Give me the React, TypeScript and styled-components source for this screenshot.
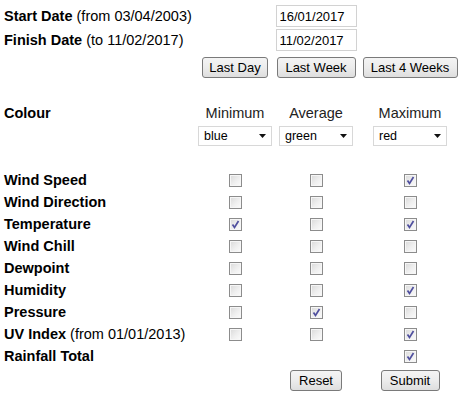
import React from 'react';
import styled, { createGlobalStyle } from 'styled-components';

const GlobalStyle = createGlobalStyle`
  html, body {
    margin: 0;
    padding: 0;
    background: #fff;
  }
  body {
    font-family: "Liberation Sans", Arial, sans-serif;
    color: #000;
  }
`;

// label column + three value columns (min / avg / max)
const COLUMNS = '192px 78px 84px 104px';

const Page = styled.div`
  width: 462px;
  box-sizing: border-box;
  padding: 4px 0 0 4px;
`;

const Row = styled.div<{ $h: number; $mt?: number }>`
  display: grid;
  grid-template-columns: ${COLUMNS};
  align-items: center;
  height: ${(p) => p.$h}px;
  margin-top: ${(p) => p.$mt ?? 0}px;
`;

const Label = styled.div`
  font-size: 14.5px;
  font-weight: bold;
  white-space: nowrap;
`;

const Note = styled.span`
  font-weight: normal;
`;

const Cell = styled.div`
  display: flex;
  justify-content: center;
  align-items: center;
`;

const Heading = styled.div`
  font-size: 14.5px;
  color: #222;
  text-align: center;
`;

const DateInput = styled.input`
  width: 81px;
  height: 22px;
  box-sizing: border-box;
  border: 1px solid #d2d2d2;
  padding: 0 0 0 3px;
  font: 13px "Liberation Sans", Arial, sans-serif;
  color: #000;
  background: #fff;
  outline: none;
`;

const Button = styled.button<{ $w: number }>`
  width: ${(p) => p.$w}px;
  height: 21px;
  padding: 0;
  box-sizing: border-box;
  border: 1px solid #7a7a7a;
  border-radius: 3px;
  background: linear-gradient(#f4f4f4 0%, #ececec 50%, #dedede 100%);
  font: 13px "Liberation Sans", Arial, sans-serif;
  color: #000;
`;

const SelectBox = styled.div`
  width: 74px;
  height: 20px;
  box-sizing: border-box;
  border: 1px solid #d8d8d8;
  background: #fff;
  display: flex;
  align-items: center;
  justify-content: space-between;
  padding: 0 5px 0 5px;
  font-size: 12.5px;
  color: #000;
`;

const Box = styled.span`
  display: inline-block;
  width: 13px;
  height: 13px;
  box-sizing: border-box;
  border: 1px solid #8c8c8c;
  background: linear-gradient(135deg, #d9d9d9 0%, #efefef 55%, #fbfbfb 100%);
  box-shadow: inset 0 0 0 1px #f6f6f6;
`;

const Check: React.FC<{ on?: boolean }> = ({ on }) => (
  <Box>
    {on && (
      <svg width="11" height="11" viewBox="0 0 11 11" style={{ display: 'block' }}>
        <path d="M2.5 5.5 L4.5 8.5 L8.5 2" fill="none" stroke="#4f4f9e" strokeWidth="1.7" />
      </svg>
    )}
  </Box>
);

const Select: React.FC<{ value: string }> = ({ value }) => (
  <SelectBox>
    <span>{value}</span>
    <svg width="7" height="4" viewBox="0 0 7 4">
      <path d="M0 0 H7 L3.5 4 Z" fill="#111" />
    </svg>
  </SelectBox>
);

const rows: { label: string; note?: string; checks: (boolean | null)[] }[] = [
  { label: 'Wind Speed', checks: [false, false, true] },
  { label: 'Wind Direction', checks: [false, false, false] },
  { label: 'Temperature', checks: [true, false, true] },
  { label: 'Wind Chill', checks: [false, false, false] },
  { label: 'Dewpoint', checks: [false, false, false] },
  { label: 'Humidity', checks: [false, false, true] },
  { label: 'Pressure', checks: [false, true, false] },
  { label: 'UV Index', note: '(from 01/01/2013)', checks: [false, false, true] },
  { label: 'Rainfall Total', checks: [null, null, true] },
];

const App: React.FC = () => {
  return (
    <Page>
      <GlobalStyle />

      {/* date range */}
      <Row $h={24}>
        <Label>Start Date <Note>(from 03/04/2003)</Note></Label>
        <Cell />
        <Cell><DateInput defaultValue="16/01/2017" /></Cell>
      </Row>
      <Row $h={24}>
        <Label>Finish Date <Note>(to 11/02/2017)</Note></Label>
        <Cell />
        <Cell><DateInput defaultValue="11/02/2017" /></Cell>
      </Row>
      <Row $h={22} $mt={4}>
        <div />
        <Cell><Button $w={66}>Last Day</Button></Cell>
        <Cell><Button $w={79}>Last Week</Button></Cell>
        <Cell><Button $w={95}>Last 4 Weeks</Button></Cell>
      </Row>

      {/* colours */}
      <Row $h={20} $mt={25}>
        <Label>Colour</Label>
        <Heading>Minimum</Heading>
        <Heading>Average</Heading>
        <Heading>Maximum</Heading>
      </Row>
      <Row $h={21} $mt={2}>
        <div />
        <Cell><Select value="blue" /></Cell>
        <Cell><Select value="green" /></Cell>
        <Cell><Select value="red" /></Cell>
      </Row>

      {/* measurements */}
      <div style={{ height: 23 }} />
      {rows.map((r) => (
        <Row $h={22} key={r.label}>
          <Label>
            {r.label}
            {r.note && <Note> {r.note}</Note>}
          </Label>
          {r.checks.map((c, i) => (
            <Cell key={i}>{c !== null && <Check on={c} />}</Cell>
          ))}
        </Row>
      ))}

      <Row $h={21} $mt={3}>
        <div />
        <div />
        <Cell><Button $w={52}>Reset</Button></Cell>
        <Cell><Button $w={59}>Submit</Button></Cell>
      </Row>
    </Page>
  );
};

export default App;
